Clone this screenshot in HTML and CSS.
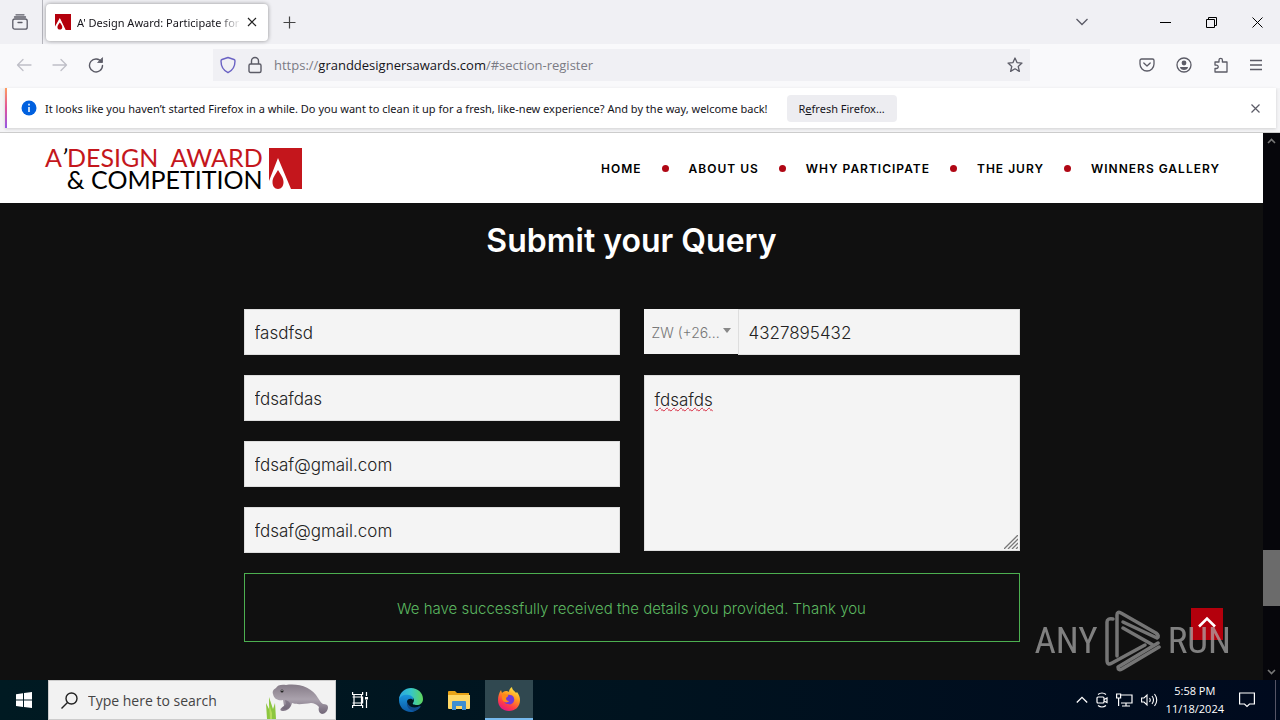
FILE: index.html
```
<!DOCTYPE html>
<html lang="en">
<head>
    <meta charset="UTF-8">
    <title>A' Design Award: Participate</title>
    <link rel="stylesheet" href="styles.css">
</head>
<body>
    <!-- browser chrome -->
    <div class="tabstrip">
        <button class="icon-btn view-btn" aria-label="Firefox View"><svg width="16" height="16" viewBox="0 0 16 16" fill="none" stroke="#5b5b66" stroke-width="1.3" stroke-linecap="round"><path d="M4 .8h8M2.5 3h11"/><rect x=".8" y="5" width="14.4" height="10.2" rx="2"/><path d="M6 8.5h4"/></svg></button>
        <div class="tab">
            <svg width="16" height="16" viewBox="0 0 33 41" preserveAspectRatio="none"><path fill="#b4000c" d="M0 0h33v41H21L10 12 0 35z"/><path fill="#fff" d="M10 10L22 41H0V32z"/><path fill="#b4000c" d="M10 22c3 5 5 8 5 12s-2 6-5 6-5-2-5-6 2-7 5-12z"/></svg>
            <span class="tab-title">A' Design Award: Participate for</span>
            <button class="icon-btn" aria-label="Close tab"><svg width="10" height="10" viewBox="0 0 10 10" stroke="#222" stroke-width="1.2"><path d="M1 1l8 8M9 1L1 9"/></svg></button>
        </div>
        <button class="icon-btn new-tab" aria-label="New tab"><svg width="13" height="13" viewBox="0 0 13 13" stroke="#444" stroke-width="1.2"><path d="M6.5 .5v12M.5 6.5h12"/></svg></button>
        <div class="window-btns">
            <button class="icon-btn" aria-label="List tabs"><svg width="14" height="8" viewBox="0 0 14 8" fill="none" stroke="#5b5b66" stroke-width="1.3"><path d="M1.5 1L7 6.5 12.5 1"/></svg></button>
            <button class="icon-btn" aria-label="Minimize"><svg width="11" height="11" viewBox="0 0 11 11" stroke="#000"><path d="M0 5.5h11"/></svg></button>
            <button class="icon-btn" aria-label="Restore"><svg width="11" height="11" viewBox="0 0 11 11" fill="none" stroke="#000"><path d="M.5 2.5h8v8h-8zM2.5 2.5v-2h8v8h-2"/></svg></button>
            <button class="icon-btn" aria-label="Close"><svg width="11" height="11" viewBox="0 0 11 11" stroke="#000"><path d="M.5 .5l10 10M10.5 .5l-10 10"/></svg></button>
        </div>
    </div>

    <div class="toolbar">
        <div class="nav-btns">
            <button class="icon-btn" aria-label="Back"><svg width="16" height="16" viewBox="0 0 16 16" fill="none" stroke="#bfbfc7" stroke-width="1.3" stroke-linecap="round" stroke-linejoin="round"><path d="M15 8H1.5M7 2.5L1.5 8 7 13.5"/></svg></button>
            <button class="icon-btn" aria-label="Forward"><svg width="16" height="16" viewBox="0 0 16 16" fill="none" stroke="#bfbfc7" stroke-width="1.3" stroke-linecap="round" stroke-linejoin="round"><path d="M1 8h13.5M9 2.5L14.5 8 9 13.5"/></svg></button>
            <button class="icon-btn" aria-label="Reload"><svg width="16" height="16" viewBox="0 0 16 16" fill="none" stroke="#5b5b66" stroke-width="1.4" stroke-linecap="round"><path d="M13.5 5A6.5 6.5 0 1 0 14.5 8.5"/><path d="M14.5 1v4.5H10z" fill="#5b5b66" stroke-width=".8" stroke-linejoin="round"/></svg></button>
        </div>
        <div class="urlbar">
            <svg width="16" height="18" viewBox="0 0 16 18" fill="none" stroke="#6a62c4" stroke-width="1.4" stroke-linejoin="round"><path d="M8 1.5l6 2c.8.3 1 .7 1 1.5 0 5-2.5 9.500-7 11.700C3.5 14.5 1 10 1 5c0-.8.2-1.2 1-1.5z"/></svg>
            <svg width="14" height="18" viewBox="0 0 14 18" fill="none" stroke="#5b5b66" stroke-width="1.4"><rect x="1" y="8" width="12" height="8.5" rx="1.5"/><path d="M3.5 8V5a3.500 3.500 0 0 1 7 0v3"/></svg>
            <span class="url">https://<b>granddesignersawards.com</b>/#section-register</span>
            <button class="icon-btn" aria-label="Bookmark"><svg width="16" height="16" viewBox="0 0 16 16" fill="none" stroke="#5b5b66" stroke-width="1.3" stroke-linejoin="round"><path d="M8 1l2 4.600 5 .5-3.800 3.300 1.200 5L8 11.800l-4.400 2.600 1.200-5L1 6.100l5-.5z"/></svg></button>
        </div>
        <div class="tools">
            <button class="icon-btn" aria-label="Pocket"><svg width="16" height="14" viewBox="0 0 16 14" fill="none" stroke="#5b5b66" stroke-width="1.3" stroke-linecap="round" stroke-linejoin="round"><path d="M2.5 1h11A1.500 1.500 0 0 1 15 2.500V6A7 7 0 0 1 1 6V2.500A1.500 1.500 0 0 1 2.500 1z"/><path d="M4.800 5L8 8l3.200-3"/></svg></button>
            <button class="icon-btn" aria-label="Account"><svg width="16" height="16" viewBox="0 0 16 16" fill="none" stroke="#5b5b66" stroke-width="1.3"><circle cx="8" cy="8" r="7"/><circle cx="8" cy="6" r="2.4" fill="#5b5b66" stroke="none"/><path d="M4 10h8c0 2-2 3-4 3s-4-1-4-3z" fill="#5b5b66" stroke="none"/></svg></button>
            <button class="icon-btn" aria-label="Extensions"><svg width="16" height="16" viewBox="0 0 16 16" fill="none" stroke="#5b5b66" stroke-width="1.3" stroke-linejoin="round"><path d="M2 5h4V3a1.700 1.700 0 0 1 3.400 0v2H14v10H2v-3.500h1.500a1.700 1.700 0 0 0 0-3.400H2z"/></svg></button>
            <button class="icon-btn" aria-label="Menu"><svg width="12" height="12" viewBox="0 0 12 12" stroke="#5b5b66" stroke-width="1.3"><path d="M0 1.500h12M0 6h12M0 10.500h12"/></svg></button>
        </div>
    </div>

    <div class="infobar-wrap">
        <div class="infobar">
            <svg width="16" height="16" viewBox="0 0 16 16"><circle cx="8" cy="8" r="7.5" fill="#0060df"/><path d="M8 7v5M8 3.800v1.700" stroke="#fff" stroke-width="1.5"/></svg>
            <span class="info-text">It looks like you haven’t started Firefox in a while. Do you want to clean it up for a fresh, like-new experience? And by the way, welcome back!</span>
            <button class="refresh">R<u>e</u>fresh Firefox…</button>
            <button class="icon-btn info-close" aria-label="Close message"><svg width="9" height="9" viewBox="0 0 9 9" stroke="#5b5b66" stroke-width="1.2"><path d="M.5 .5l8 8M8.500 .5l-8 8"/></svg></button>
        </div>
    </div>

    <!-- web page -->
    <div class="viewport">
        <div class="page">
            <header class="site-header">
                <a href="#" class="logo">
                    <span class="logo-text"><span class="logo-top">A<i>’</i>DESIGN&nbsp; AWARD</span><span>&amp; COMPETITION</span></span>
                    <svg width="33" height="41" viewBox="0 0 33 41"><path fill="#c4161c" d="M0 0h33v41H22L9 10 0 33z"/><path fill="#c4161c" d="M9 22c3 5 5.500 8 5.500 12s-2 7-5.500 7-5.500-3-5.500-7S6 27 9 22z"/></svg>
                </a>
                <nav class="site-nav">
                    <a href="#home">HOME</a><span class="dot"></span>
                    <a href="#about">ABOUT US</a><span class="dot"></span>
                    <a href="#why">WHY PARTICIPATE</a><span class="dot"></span>
                    <a href="#jury">THE JURY</a><span class="dot"></span>
                    <a href="#winners">WINNERS GALLERY</a>
                </nav>
            </header>
            <main class="query">
                <h2>Submit your Query</h2>
                <form class="query-form">
                    <div class="col">
                        <input type="text" aria-label="First name" value="fasdfsd">
                        <input type="text" aria-label="Last name" value="fdsafdas">
                        <input type="email" aria-label="Email" value="fdsaf@gmail.com">
                        <input type="email" aria-label="Confirm email" value="fdsaf@gmail.com">
                    </div>
                    <div class="col">
                        <div class="phone">
                            <div class="code">
                                <select aria-label="Country code"><option>ZW (+26...</option></select>
                                <span class="caret"></span>
                            </div>
                            <input type="tel" aria-label="Phone" value="4327895432">
                        </div>
                        <div class="message">
                            <textarea aria-label="Message" spellcheck="false">fdsafds</textarea>
                            <svg class="grip" width="14" height="14" viewBox="0 0 14 14" stroke="#777" stroke-width="1.3"><path d="M0 14L14 0M4 14L14 4M8 14l6-6M12 14l2-2"/></svg>
                        </div>
                    </div>
                    <p class="success">We have successfully received the details you provided. Thank you</p>
                </form>
            </main>
            <a href="#top" class="to-top" aria-label="Back to top"><svg width="18" height="12" viewBox="0 0 18 12" fill="none" stroke="#fff" stroke-width="2.6"><path d="M1 10.500L9 2.500l8 8"/></svg></a>
            <div class="watermark">
                <span>ANY</span>
                <svg width="56" height="62" viewBox="0 0 56 62" fill="none" stroke="#a0a0a0" stroke-width="3.5" stroke-linecap="round" stroke-linejoin="round"><path d="M12 46V5q0-4 4-2L51 23q4 3 1 5L18 12"/><path d="M8 9Q2 8 2 12V50q0 6 5 3L40 35"/><path d="M18 18L48 35M54 37L17 59q-4 2-4-2L53 33"/></svg>
                <span>RUN</span>
            </div>
        </div>
        <div class="scrollbar">
            <svg width="9" height="6" viewBox="0 0 9 6" fill="none" stroke="#777" stroke-width="1.6"><path d="M1 5l3.500-3.500L8 5"/></svg>
            <span class="above"></span>
            <span class="thumb"></span>
            <span class="below"></span>
            <svg width="9" height="6" viewBox="0 0 9 6" fill="none" stroke="#777" stroke-width="1.6"><path d="M1 1l3.500 3.500L8 1"/></svg>
        </div>
    </div>

    <!-- taskbar -->
    <footer class="taskbar">
        <button class="task" aria-label="Start"><svg width="16" height="16" viewBox="0 0 16 16" fill="#fff"><path d="M0 2.200L7 1.200V7.600H0zM8 1.100L16 0v7.600H8zM0 8.500h7v6.400L0 13.900zM8 8.500h8V16L8 15z"/></svg></button>
        <label class="search">
            <svg width="17" height="17" viewBox="0 0 17 17" fill="none" stroke="#222" stroke-width="1.4"><circle cx="10.5" cy="6.5" r="5.5"/><path d="M6.500 10.500L.5 16.500"/></svg>
            <input type="text" placeholder="Type here to search" aria-label="Search">
            <svg width="64" height="38" viewBox="0 0 64 38">
                <defs><linearGradient id="seal" x1="0" y1="0" x2="0" y2="1"><stop offset="0" stop-color="#857b87"/><stop offset=".5" stop-color="#aaa2ad"/><stop offset="1" stop-color="#706577"/></linearGradient></defs>
                <path fill="#8cc63f" d="M1 38L0 22l3 6V16l4 12 2-6 1 16z"/><path fill="#b5dc5a" d="M4 38L3 23l3 9v6z"/>
                <path fill="url(#seal)" d="M7 13C6 10 8 8 10 7c1-3 6-4 10-3 12-2 26 2 32 13 2 3 3 5 5 6 3 0 5 1 5 3 0 4-3 7-6 7-3-1-4-4-3-7-3-3-5-4-8-4-8 1-13 2-19 0-1 5-5 8-9 8-4 0-3-3 1-5l-1-6c-5 1-9-1-10-6z"/>
                <path fill="#64596c" d="M19 19c4 1 7 4 5 7-3 3-7 3-8 1l4-4z" opacity=".5"/>
                <circle cx="16" cy="10" r="1.5" fill="#222"/><circle cx="16" cy="9.500" r=".5" fill="#fff"/>
            </svg>
        </label>
        <button class="task" aria-label="Task view"><svg width="17" height="16" viewBox="0 0 17 16" fill="none" stroke="#fff" stroke-width="1.2"><path d="M.6 0v2.500h10V0M.6 16v-2.500h10V16M2 2.500v11M9.500 2.500v11M.6 5h10v6H.6M14.500 0v4M14.500 8v8"/><path d="M13 5h3v2.500h-3z" fill="#fff" stroke="none"/></svg></button>
        <button class="task edge" aria-label="Edge"><svg width="24" height="24" viewBox="0 0 24 24">
            <defs><linearGradient id="eg" x1="0" x2="1"><stop offset="0" stop-color="#2aa5e0"/><stop offset=".5" stop-color="#36c6c9"/><stop offset="1" stop-color="#5fd65b"/></linearGradient><linearGradient id="eb" x1="0" y1="0" x2="0" y2="1"><stop offset="0" stop-color="#1b9de2"/><stop offset="1" stop-color="#0c59a4"/></linearGradient></defs>
            <path fill="url(#eb)" d="M0 12c0-5 5-8 9-7 5 1 6 5 5 7-1-2-6-2-6 2 0 5 6 8 13 4-2 4-6 6-9 6C5 24 0 19 0 12z"/>
            <path fill="url(#eg)" d="M0 11C1 4 6 0 12 0c7 0 12 5 12 11 0 4-3 6-6 6-3 0-5-1-4-2 2-2 1-7-4-8-4-1-8 0-10 4z"/><path fill="#114a8b" d="M8 14c-1 5 3 9 8 9 3-1 5-3 6-5-6 3-12 2-14-4z"/></svg></button>
        <button class="task files" aria-label="File Explorer"><svg width="22" height="19" viewBox="0 0 22 19"><path fill="#e8a317" d="M0 1q0-1 1-1h6l2 2h12v4H0z"/><path fill="#ffd866" d="M0 4h22v13q0 1-1 1H1q-1 0-1-1z"/><path fill="#3f8fd0" d="M4 11q0-1 1-1h12q1 0 1 1v8h-4v-4H8v4H4z"/></svg></button>
        <button class="task active" aria-label="Firefox"><svg width="24" height="24" viewBox="0 0 24 24">
            <defs><linearGradient id="ff" x1=".8" y1="0" x2=".3" y2="1"><stop offset="0" stop-color="#fff04a"/><stop offset=".4" stop-color="#ff9a1f"/><stop offset=".75" stop-color="#ff3b47"/><stop offset="1" stop-color="#e31587"/></linearGradient></defs>
            <path fill="url(#ff)" d="M1 13C1 9 2 6 4 3l1 3c1-1 2-2 4-2 1 0 2 0 3 1 0-2 1-4 3-5 0 3 3 4 4 6l1-1c2 3 3 5 3 8 0 7-5 11-11 11S1 20 1 13z"/><path fill="#7139d8" d="M7 12c0-3 3-5 6-4 3 0 5 3 4 6s-4 4-6 3c-3 0-4-2-4-5z"/><path fill="#ff8a16" d="M5 7c3-1 4 1 6 1 1 1-1 2-2 3 0 2 1 3 3 3-2 3-7 1-7-3z"/></svg></button>
        <div class="tray">
            <svg width="12" height="8" viewBox="0 0 12 8" fill="none" stroke="#fff" stroke-width="1.3"><path d="M.8 6.500L6 1.300l5.200 5.200"/></svg>
            <svg width="12" height="16" viewBox="0 0 12 16" fill="none" stroke="#fff" stroke-width="1.2"><rect x="1" y="5" width="7" height="6" rx="1"/><path d="M8 7.500L11 6v4.500L8 9M2 2.500Q6-.5 10 2.500M2 13.500q4 3 8 0"/></svg>
            <svg width="17" height="14" viewBox="0 0 17 14" fill="none" stroke="#fff" stroke-width="1.2"><path d="M5 2h11v8H5M10 10v3M6 13h8M.6 1h4v4h-4zM2.600 5v8"/></svg>
            <svg width="17" height="14" viewBox="0 0 17 14" fill="none" stroke="#fff" stroke-width="1.1"><path d="M.6 5h2.400l3-3v10L3 9H.6zM8.500 5q1.500 2 0 4M11 3q3 4 0 8M13.500 1q4.500 6 0 12"/></svg>
            <div class="clock"><span>5:58 PM</span><span>11/18/2024</span></div>
            <svg width="16" height="16" viewBox="0 0 16 16" fill="none" stroke="#fff" stroke-width="1.2"><path d="M.6 1h14.800v11H10.500L8 14.500 5.500 12H.6z"/></svg>
            <span class="show-desktop"></span>
        </div>
    </footer>
</body>
</html>
```
FILE: styles.css
```
* { box-sizing: border-box; }
body { margin: 0; min-height: 100vh; display: flex; flex-direction: column; font-family: "Open Sans", "Noto Sans", sans-serif; font-size: 12px; color: #15141a; background: #f9f9fb; }
a { color: inherit; text-decoration: none; }
button { font: inherit; color: inherit; cursor: pointer; }
svg { display: block; flex: none; }
.icon-btn { display: flex; align-items: center; justify-content: center; padding: 0; border: 0; background: none; }

/* tabs */
.tabstrip { display: flex; align-items: center; height: 44px; background: #f0f0f4; }
.view-btn { width: 43px; height: 44px; padding-right: 3px; border-right: 1px solid #b5b5bc; }
.tab { display: flex; align-items: center; gap: 6px; width: 222px; height: 37px; margin-left: 3px; padding: 0 11px 0 9px; background: #fff; border-radius: 4px; box-shadow: 0 0 4px rgba(0, 0, 0, .4); }
.tab-title { flex: 1; min-width: 0; overflow: hidden; white-space: nowrap; font-family: "Noto Sans", sans-serif; font-size: 11px; -webkit-mask-image: linear-gradient(to left, transparent, #000 24px); mask-image: linear-gradient(to left, transparent, #000 24px); }
.new-tab { margin-left: 15px; }
.window-btns { display: flex; align-items: center; margin-left: auto; }
.window-btns .icon-btn { width: 46px; height: 44px; }
.window-btns .icon-btn:first-child { margin-right: 37px; }

/* toolbar */
.toolbar { display: flex; align-items: center; height: 44px; padding: 0 18px 3px 16px; }
.nav-btns { display: flex; gap: 20px; }
.urlbar { display: flex; align-items: center; gap: 12px; flex: 0 1 817px; height: 32px; margin: 0 auto; padding: 0 7px; background: #f0f0f4; }
.url { flex: 1; font-size: 13px; color: #7b7b84; }
.url b { font-weight: 400; color: #15141a; }
.tools { display: flex; align-items: center; gap: 21px; }

/* notification bar */
.infobar-wrap { padding: 0 4px 4px 5px; border-bottom: 1px solid #ccc; background: #f4f4f6; }
.infobar { display: flex; align-items: center; height: 40px; padding: 0 16px 0 14px; border-left: 2px solid; border-image: linear-gradient(#ffa15c, #e0529c, #9059e8) 1; background: #fff; box-shadow: 0 1px 3px rgba(0, 0, 0, .15); }
.info-text { margin-left: 8px; font-family: "Noto Sans", sans-serif; font-size: 11px; white-space: nowrap; }
.refresh { margin-left: 19px; height: 27px; padding: 0 12px; border: 0; border-radius: 4px; background: #ededf1; font-family: "Noto Sans", sans-serif; font-size: 11px; }
.info-close { margin-left: auto; }

/* web page */
.viewport { flex: 1; display: flex; background: #101010; }
.page { position: relative; flex: 1; font-family: Inter, "Liberation Sans", sans-serif; }
.site-header { display: flex; align-items: center; justify-content: space-between; height: 70px; padding: 0 43px 0 45px; background: #fff; }
.logo { display: flex; align-items: center; gap: 6px; }
.logo-text { display: flex; flex-direction: column; align-items: flex-end; font-family: Lato, sans-serif; font-size: 25px; line-height: 22px; color: #000; }
.logo-top { color: #c4161c; }
.logo-top i { color: #000; }
.site-nav { display: flex; align-items: center; gap: 20px; font-size: 12px; font-weight: 600; letter-spacing: 1px; color: #000; }
.dot { width: 7px; height: 7px; border-radius: 50%; background: #b00714; }
.query { max-width: 776px; margin: 0 auto; padding: 16px 0 38px; }
.query h2 { margin: 0 0 46px; font-size: 32px; line-height: 44px; font-weight: 600; text-align: center; color: #fff; }
.query-form { display: grid; grid-template-columns: 1fr 1fr; gap: 20px 24px; }
.col { display: flex; flex-direction: column; gap: 20px; }
.col input, .col textarea { width: 100%; height: 46px; padding: 4px 10px 2px; border: 1px solid #dedede; background: #f4f4f4; font: 300 17px/24px Inter, sans-serif; color: #222; outline: 0; }
.phone { display: flex; }
.phone input { flex: 1; min-width: 0; }
.code { position: relative; width: 94px; height: 45px; background: #f4f4f4; }
.code select { appearance: none; width: 100%; height: 100%; padding: 4px 8px 2px; border: 0; background: none; font: 300 14px Inter, sans-serif; color: #777; }
.caret { position: absolute; right: 7px; top: 19px; border: 4px solid transparent; border-top: 5px solid #888; border-bottom: 0; pointer-events: none; }
.message { position: relative; }
.message textarea { display: block; height: 176px; padding: 12px 10px; resize: none; text-decoration: underline wavy #d7263d 1px; }
.grip { position: absolute; right: 2px; bottom: 2px; }
.success { grid-column: 1 / -1; margin: 0; padding: 25px 16px 22px; border: 1px solid #4caf50; font-size: 15px; line-height: 20px; font-weight: 300; text-align: center; color: #5cb860; }
.to-top { position: absolute; right: 40px; bottom: 40px; display: flex; align-items: center; justify-content: center; width: 32px; height: 32px; padding-bottom: 4px; background: #b4000c; }
.watermark { position: absolute; right: 32px; bottom: 8px; display: flex; align-items: center; gap: 7px; font-family: "Roboto Condensed", "Liberation Sans Narrow", "DejaVu Sans Condensed", sans-serif; font-size: 37px; line-height: 62px; color: #b0b0b0; opacity: .7; pointer-events: none; }

/* page scrollbar */
.scrollbar { display: flex; flex-direction: column; align-items: center; width: 17px; padding: 5px 0; background: #06060b; }
.above { flex: 13; }
.thumb { width: 17px; height: 56px; background: #6b6b6b; }
.below { flex: 2; }

/* taskbar */
.taskbar { display: flex; height: 40px; background: linear-gradient(90deg, #001a22, #00131f 50%, #000a1e); color: #fff; }
.task { display: flex; align-items: center; justify-content: center; width: 48px; padding: 0; border: 0; background: none; }
.edge { margin-left: 3px; }
.active { background: #304850; border-bottom: 2px solid #76b9ed; }
.files { margin-right: 2px; }
.search { display: flex; align-items: center; width: 288px; padding: 0 5px 0 12px; border: 1px solid #ccc; background: #f2f2f2; }
.search input { flex: 1; min-width: 0; margin-left: 10px; padding: 0; border: 0; background: none; font: 14px "Open Sans", sans-serif; }
.search input::placeholder { color: #444; }
.tray { display: flex; align-items: center; gap: 8px; margin-left: auto; }
.clock { display: flex; flex-direction: column; align-items: center; margin-right: 7px; font-size: 11px; line-height: 18px; }
.show-desktop { width: 1px; height: 40px; margin: 0 4px 0 12px; background: #556; }
```
